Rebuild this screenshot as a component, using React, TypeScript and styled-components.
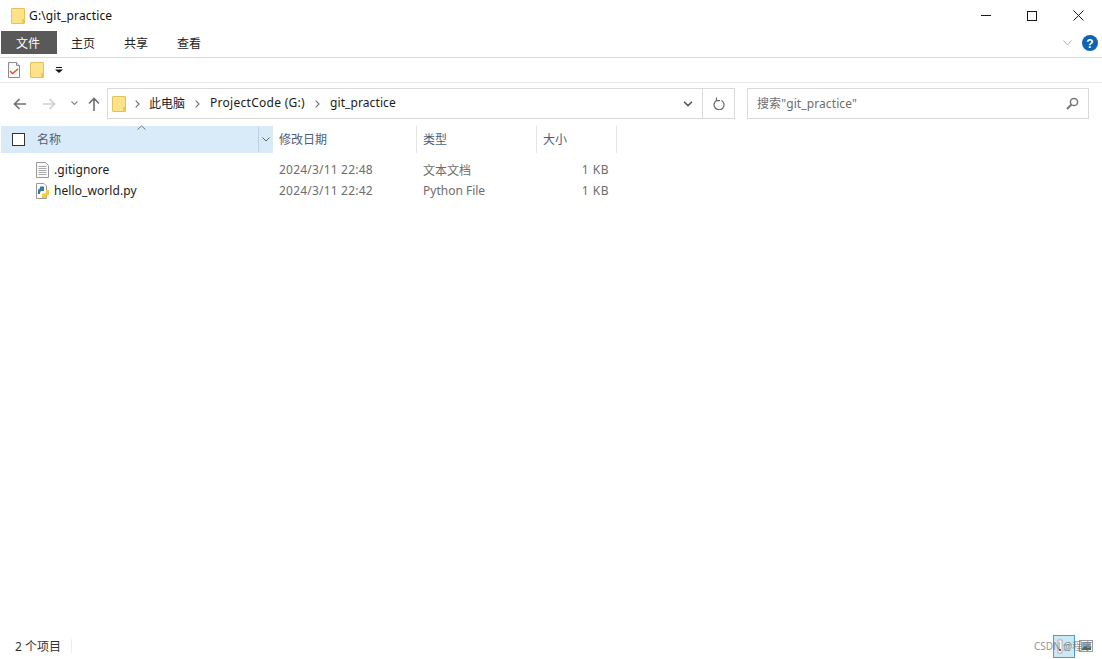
import styled, { createGlobalStyle } from 'styled-components'

const GlobalStyle = createGlobalStyle`
  html, body {
    margin: 0;
    padding: 0;
    background: #ffffff;
    overflow: hidden;
  }
  body {
    font-family: 'Noto Sans', 'Noto Sans CJK SC', sans-serif;
    font-size: 12px;
    color: #1a1a1a;
  }
`

const Win = styled.div`
  width: 1102px;
  height: 659px;
  display: flex;
  flex-direction: column;
  background: #fff;
  position: relative;
`

const TitleBar = styled.div`
  height: 31px;
  display: flex;
  align-items: center;
  padding-left: 11px;
  gap: 4px;
`

const TitleText = styled.span`
  font-size: 12px;
  color: #111;
  letter-spacing: 0.14px;
`

const WinButtons = styled.div`
  margin-left: auto;
  display: flex;
  height: 31px;
  align-items: center;
  padding-right: 1px;
`

const WinButton = styled.div`
  width: 46px;
  height: 31px;
  display: flex;
  align-items: center;
  justify-content: center;
`

const Ribbon = styled.div`
  height: 26px;
  border-bottom: 1px solid #dadbdc;
  display: flex;
  align-items: flex-start;
  padding-left: 1px;
`

const Tab = styled.div<{ $active?: boolean }>`
  width: ${p => (p.$active ? '56px' : '53px')};
  box-sizing: border-box;
  padding-left: ${p => (p.$active ? '15px' : '14px')};
  height: 23px;
  display: flex;
  align-items: center;
  font-size: 12px;
  background: ${p => (p.$active ? '#595959' : 'transparent')};
  color: ${p => (p.$active ? '#fff' : '#222')};
`

const RibbonRight = styled.div`
  margin-left: auto;
  display: flex;
  align-items: center;
  height: 23px;
  gap: 10px;
  padding-right: 4px;
`

const QuickBar = styled.div`
  height: 24px;
  border-bottom: 1px solid #e6e6e6;
  display: flex;
  align-items: center;
  padding-left: 8px;
  gap: 10px;
`

const DropMark = styled.svg`
  margin-left: 1px;
`

const NavBar = styled.div`
  height: 43px;
  box-sizing: border-box;
  display: flex;
  align-items: flex-start;
  padding: 5px 13px 0 9px;
`

const NavIcons = styled.div`
  display: flex;
  align-items: center;
  width: 98px;
  height: 31px;
  flex: none;
`

const NavIcon = styled.div<{ $w: number }>`
  width: ${p => p.$w}px;
  display: flex;
  justify-content: center;
  align-items: center;
`

const AddressBox = styled.div`
  flex: none;
  box-sizing: border-box;
  width: 628px;
  height: 31px;
  border: 1px solid #d9d9d9;
  display: flex;
  align-items: center;
  padding-left: 4px;
`

const Crumb = styled.span<{ $spacing?: number }>`
  font-size: 12px;
  color: #1a1a1a;
  position: relative;
  top: -1px;
  letter-spacing: ${p => p.$spacing ?? 0}px;
`

const CrumbSep = styled.span<{ $w?: number }>`
  width: ${p => p.$w ?? 25}px;
  display: flex;
  justify-content: center;
`

const AddressRight = styled.div`
  margin-left: auto;
  display: flex;
  align-items: center;
  height: 100%;
`

const AddressBtn = styled.div<{ $divided?: boolean }>`
  width: ${p => (p.$divided ? '31px' : '28px')};
  height: 100%;
  display: flex;
  align-items: center;
  justify-content: center;
  border-left: ${p => (p.$divided ? '1px solid #d9d9d9' : 'none')};
`

const SearchBox = styled.div`
  flex: none;
  box-sizing: border-box;
  margin-left: 12px;
  width: 342px;
  height: 31px;
  border: 1px solid #d9d9d9;
  display: flex;
  align-items: center;
  padding: 0 9px;
  color: #6d6d6d;
  font-size: 12px;
  justify-content: space-between;
`

const SearchHint = styled.span`
  position: relative;
  top: -1px;
  letter-spacing: 0.1px;
`

const HeaderRow = styled.div`
  height: 27px;
  display: flex;
  padding-left: 1px;
  margin-bottom: 6px;
`

const NameHeader = styled.div`
  width: 272px;
  box-sizing: border-box;
  padding-bottom: 2px;
  background: #d9ebf9;
  display: flex;
  align-items: center;
  position: relative;
  color: #4c607a;
`

const CheckBox = styled.div`
  width: 11px;
  height: 11px;
  border: 1px solid #333;
  margin-left: 11px;
  margin-right: 12px;
  margin-top: 2px;
  background: #fff;
`

const SortCaret = styled.div`
  position: absolute;
  top: -1px;
  left: 136px;
  line-height: 0;
`

const HeaderDrop = styled.div`
  margin-left: auto;
  width: 14px;
  height: 100%;
  margin-bottom: -2px;
  border-left: 1px solid #bcd0e2;
  display: flex;
  align-items: center;
  justify-content: center;
`

const HeaderCell = styled.div<{ $w: number }>`
  width: ${p => p.$w}px;
  box-sizing: border-box;
  padding: 0 0 2px 6px;
  display: flex;
  align-items: center;
  color: #4c607a;
  border-right: 1px solid #e5e5e5;
`

const FileRow = styled.div`
  height: 21px;
  display: flex;
  align-items: center;
  padding-left: 35px;
`

const FileIcon = styled.div`
  width: 14px;
  height: 16px;
  margin-right: 5px;
  line-height: 0;
`

const FileName = styled.div`
  width: 225px;
  color: #1a1a1a;
  letter-spacing: 0.08px;
`

const FileCell = styled.div<{ $w: number; $spacing?: number; $right?: boolean }>`
  width: ${p => p.$w}px;
  color: #6d6d6d;
  letter-spacing: ${p => p.$spacing ?? 0}px;
  text-align: ${p => (p.$right ? 'right' : 'left')};
`

const Spacer = styled.div`
  flex: 1;
`

const StatusBar = styled.div`
  height: 26px;
  display: flex;
  align-items: center;
  padding-left: 15px;
  color: #333;
  position: relative;
`

const StatusDivider = styled.div`
  width: 1px;
  height: 14px;
  background: #eeeeee;
  margin-left: 10px;
`

const ViewGroup = styled.div`
  margin-left: auto;
  margin-right: 9px;
  display: flex;
  align-items: center;
  gap: 4px;
`

const ViewDetail = styled.div`
  width: 20px;
  height: 21px;
  background: #cce8f6;
  border: 1px solid #3fa2d8;
  line-height: 0;
`

const Watermark = styled.div`
  position: absolute;
  left: 1034px;
  top: 5px;
  font-size: 10px;
  color: rgba(110, 110, 110, 0.75);
  white-space: nowrap;
`

const Folder = () => (
  <svg width={14} height={16} viewBox="0 0 14 16">
    <rect x="0.5" y="0.5" width="13" height="15" rx="0.5" fill="#fde289" stroke="#e3c25c" />
    <rect x="11" y="11" width="2.5" height="4.5" fill="#f4c64e" />
  </svg>
)

const CrumbArrow = () => (
  <svg width="5" height="8" viewBox="0 0 5 8" fill="none" stroke="#777" strokeWidth="1.2">
    <path d="M.7.7 4 4 .7 7.3" />
  </svg>
)

export default function App() {
  return (
    <>
      <GlobalStyle />
      <Win>
        <TitleBar>
          <Folder />
          <TitleText>G:\git_practice</TitleText>
          <WinButtons>
            <WinButton>
              <svg width="10" height="2" viewBox="0 0 10 2">
                <rect width="10" height="1" fill="#1a1a1a" />
              </svg>
            </WinButton>
            <WinButton>
              <svg width="10" height="10" viewBox="0 0 10 10" fill="none" stroke="#1a1a1a">
                <rect x=".5" y=".5" width="9" height="9" />
              </svg>
            </WinButton>
            <WinButton>
              <svg width="11" height="11" viewBox="0 0 11 11" fill="none" stroke="#1a1a1a" strokeWidth="1">
                <path d="M.5.5 10.5 10.5M10.5.5 .5 10.5" />
              </svg>
            </WinButton>
          </WinButtons>
        </TitleBar>

        <Ribbon>
          <Tab $active>文件</Tab>
          <Tab>主页</Tab>
          <Tab>共享</Tab>
          <Tab>查看</Tab>
          <RibbonRight>
            <svg width="9" height="6" viewBox="0 0 9 6" fill="none" stroke="#b0b0b0" strokeWidth="1">
              <path d="M.5.5 4.5 5 8.5.5" />
            </svg>
            <svg width="16" height="16" viewBox="0 0 16 16">
              <circle cx="8" cy="8" r="8" fill="#0f63b5" />
              <text x="8" y="12.5" textAnchor="middle" fontSize="12" fontWeight="700" fill="#fff" fontFamily="'Liberation Sans', sans-serif">?</text>
            </svg>
          </RibbonRight>
        </Ribbon>

        <QuickBar>
          <svg width="12" height="16" viewBox="0 0 12 16">
            <path d="M.5.5H8.5L11.5 3.5V15.5H.5Z" fill="#fafafa" stroke="#8a8a8a" />
            <path d="M8.5.5V3.5H11.5" fill="#e8e8e8" stroke="#8a8a8a" />
            <path d="M2 9 4.5 11.5 10 7" fill="none" stroke="#e8542a" strokeWidth="1.5" />
          </svg>
          <Folder />
          <DropMark width="8" height="6" viewBox="0 0 8 6">
            <rect x="1" y="0" width="6" height="1" fill="#111" />
            <path d="M0 2.5H8L4 6Z" fill="#111" />
          </DropMark>
        </QuickBar>

        <NavBar>
          <NavIcons>
            <NavIcon $w={22}>
              <svg width="14" height="12" viewBox="0 0 14 12" fill="none" stroke="#6f6f6f" strokeWidth="1.6">
                <path d="M13 6H1.5M6.5 1 1.5 6l5 5" />
              </svg>
            </NavIcon>
            <NavIcon $w={36}>
              <svg width="14" height="12" viewBox="0 0 14 12" fill="none" stroke="#cfcfcf" strokeWidth="1.6">
                <path d="M1 6h11.5M7.5 1l5 5-5 5" />
              </svg>
            </NavIcon>
            <NavIcon $w={14}>
              <svg width="7" height="5" viewBox="0 0 7 5" fill="none" stroke="#8a8a8a" strokeWidth="1.2">
                <path d="M.5.5 3.5 3.5 6.5.5" />
              </svg>
            </NavIcon>
            <NavIcon $w={26}>
              <svg width="12" height="14" viewBox="0 0 12 14" fill="none" stroke="#6f6f6f" strokeWidth="1.6">
                <path d="M6 14V1.5M1 6.5l5-5 5 5" />
              </svg>
            </NavIcon>
          </NavIcons>
          <AddressBox>
            <Folder />
            <CrumbSep $w={23}>
              <CrumbArrow />
            </CrumbSep>
            <Crumb>此电脑</Crumb>
            <CrumbSep>
              <CrumbArrow />
            </CrumbSep>
            <Crumb $spacing={0.28}>ProjectCode (G:)</Crumb>
            <CrumbSep>
              <CrumbArrow />
            </CrumbSep>
            <Crumb $spacing={0.1}>git_practice</Crumb>
            <AddressRight>
              <AddressBtn>
                <svg width="10" height="6" viewBox="0 0 10 6" fill="none" stroke="#555" strokeWidth="1.5">
                  <path d="M1 .8 5 4.6 9 .8" />
                </svg>
              </AddressBtn>
              <AddressBtn $divided>
                <svg width="12" height="13" viewBox="0 0 12 13" fill="none" stroke="#6a6a6a" strokeWidth="1.2">
                  <path d="M4 3.2A5 5 0 1 0 8.5 3.4" />
                  <path d="M3.5 .5V3.7H7" />
                </svg>
              </AddressBtn>
            </AddressRight>
          </AddressBox>
          <SearchBox>
            <SearchHint>搜索"git_practice"</SearchHint>
            <svg width="13" height="13" viewBox="0 0 13 13" fill="none" stroke="#777">
              <circle cx="8" cy="5" r="3.6" strokeWidth="1.5" />
              <path d="M5.5 7.5 1 12" strokeWidth="2" />
            </svg>
          </SearchBox>
        </NavBar>

        <HeaderRow>
          <NameHeader>
            <CheckBox />
            名称
            <SortCaret>
              <svg width="9" height="5" viewBox="0 0 9 5" fill="none" stroke="#777">
                <path d="M.5 4.5 4.5 1l4 3.5" />
              </svg>
            </SortCaret>
            <HeaderDrop>
              <svg width="8" height="5" viewBox="0 0 8 5" fill="none" stroke="#666">
                <path d="M.5.5 4 4 7.5.5" />
              </svg>
            </HeaderDrop>
          </NameHeader>
          <HeaderCell $w={144}>修改日期</HeaderCell>
          <HeaderCell $w={120}>类型</HeaderCell>
          <HeaderCell $w={80}>大小</HeaderCell>
        </HeaderRow>

        <FileRow>
          <FileIcon>
            <svg width="14" height="16" viewBox="0 0 14 16">
              <path d="M1.5.5H10.5L13.5 3.5V15.5H1.5Z" fill="#fafafa" stroke="#9a9a9a" />
              <path d="M3.5 4.5h8M3.5 6.5h8M3.5 8.5h8M3.5 10.5h8M3.5 12.5h8" stroke="#a9a9a9" />
            </svg>
          </FileIcon>
          <FileName>.gitignore</FileName>
          <FileCell $w={144} $spacing={0.2}>2024/3/11 22:48</FileCell>
          <FileCell $w={110}>文本文档</FileCell>
          <FileCell $w={76} $spacing={0.5} $right>1 KB</FileCell>
        </FileRow>
        <FileRow>
          <FileIcon>
            <svg width="15" height="16" viewBox="0 0 15 16">
              <path d="M1.5.5H9L11.5 3V15.5H1.5Z" fill="#fff" stroke="#9a9a9a" />
              <path d="M3 11V7.5Q3 5.5 5 5.5V3.5H9V8H6Q5 8 5 11Z" fill="#3a77a9" />
              <path d="M14 7V11Q14 12.5 11.5 12.5V15H7V10.5H10Q11 10.5 11 7Z" fill="#f7c93e" />
            </svg>
          </FileIcon>
          <FileName>hello_world.py</FileName>
          <FileCell $w={144} $spacing={0.2}>2024/3/11 22:42</FileCell>
          <FileCell $w={110}>Python File</FileCell>
          <FileCell $w={76} $spacing={0.5} $right>1 KB</FileCell>
        </FileRow>

        <Spacer />

        <StatusBar>
          2 个项目
          <StatusDivider />
          <ViewGroup>
            <ViewDetail>
              <svg width="20" height="21" viewBox="0 0 20 21">
                <rect x="4" y="4" width="4" height="13" fill="#fff" stroke="#8a8a8a" strokeWidth="0.6" />
                <rect x="5" y="13" width="2" height="2" fill="#d23b3b" />
                <path d="M9.5 9h7M9.5 14h7" stroke="#999" strokeDasharray="3 1" />
              </svg>
            </ViewDetail>
            <svg width="14" height="12" viewBox="0 0 14 12">
              <rect x=".5" y=".5" width="13" height="11" fill="#fff" stroke="#9a9a9a" />
              <rect x="2" y="2" width="10" height="8" fill="#8db4d4" />
              <path d="M2 10 6 6l3 2 3-1v3Z" fill="#3f6b52" />
            </svg>
          </ViewGroup>
          <Watermark>CSDN @程序</Watermark>
        </StatusBar>
      </Win>
    </>
  )
}
